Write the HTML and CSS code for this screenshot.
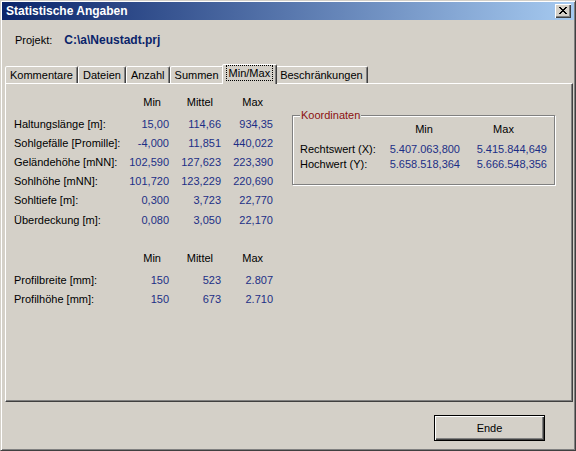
FILE: index.html
```html
<!DOCTYPE html>
<html lang="de">
<head>
  <meta charset="UTF-8" />
  <title>Statistische Angaben</title>
  <link rel="stylesheet" href="styles.css">
</head>
<body>
  <div class="window">
    <div class="titlebar">
      <span class="title">Statistische Angaben</span>
      <button class="close" title="Schließen">
        <svg width="8" height="7" viewBox="0 0 8 7" shape-rendering="crispEdges">
          <path d="M0 0h2v1H0zM6 0h2v1H6zM1 1h2v1H1zM5 1h2v1H5zM2 2h4v1H2zM3 3h2v1H3zM2 4h4v1H2zM1 5h2v1H1zM5 5h2v1H5zM0 6h2v1H0zM6 6h2v1H6z" fill="#000"/>
        </svg>
      </button>
    </div>

    <div class="project">
      <span>Projekt:</span>
      <span class="path">C:\a\Neustadt.prj</span>
    </div>

    <div class="tabs">
      <div class="tab">Kommentare</div>
      <div class="tab">Dateien</div>
      <div class="tab">Anzahl</div>
      <div class="tab">Summen</div>
      <div class="tab active"><span class="focus">Min/Max</span></div>
      <div class="tab">Beschränkungen</div>
    </div>

    <div class="panel">
      <div class="stats">
        <div class="grid">
          <span></span><span class="hd">Min</span><span class="hd">Mittel</span><span class="hd hd-max">Max</span>
          <span>Haltungslänge [m]:</span><span class="val">15,00</span><span class="val">114,66</span><span class="val">934,35</span>
          <span>Sohlgefälle [Promille]:</span><span class="val">-4,000</span><span class="val">11,851</span><span class="val">440,022</span>
          <span>Geländehöhe [mNN]:</span><span class="val">102,590</span><span class="val">127,623</span><span class="val">223,390</span>
          <span>Sohlhöhe [mNN]:</span><span class="val">101,720</span><span class="val">123,229</span><span class="val">220,690</span>
          <span>Sohltiefe [m]:</span><span class="val">0,300</span><span class="val">3,723</span><span class="val">22,770</span>
          <span>Überdeckung [m]:</span><span class="val">0,080</span><span class="val">3,050</span><span class="val">22,170</span>
        </div>

        <div class="grid second">
          <span></span><span class="hd">Min</span><span class="hd">Mittel</span><span class="hd hd-max">Max</span>
          <span>Profilbreite [mm]:</span><span class="val">150</span><span class="val">523</span><span class="val">2.807</span>
          <span>Profilhöhe [mm]:</span><span class="val">150</span><span class="val">673</span><span class="val">2.710</span>
        </div>
      </div>

      <fieldset class="coords">
        <legend>Koordinaten</legend>
        <div class="cgrid">
          <span></span><span class="chd">Min</span><span class="chd">Max</span>
          <span>Rechtswert (X):</span><span class="val">5.407.063,800</span><span class="val">5.415.844,649</span>
          <span>Hochwert (Y):</span><span class="val">5.658.518,364</span><span class="val">5.666.548,356</span>
        </div>
      </fieldset>
    </div>

    <div class="footer">
      <button class="btn">Ende</button>
    </div>
  </div>
</body>
</html>
```

FILE: styles.css
```css
body {
  margin: 0;
  background: #d4d0c8;
  font-family: "Liberation Sans", Arial, sans-serif;
  font-size: 11px;
  color: #000;
}

.window {
  width: 576px;
  height: 451px;
  box-sizing: border-box;
  padding: 1px;
  border: 1px solid;
  border-color: #d4d0c8 #404040 #404040 #d4d0c8;
  box-shadow: inset 1px 1px 0 #fff, inset -1px -1px 0 #808080;
  display: flex;
  flex-direction: column;
}

/* title bar */
.titlebar {
  height: 18px;
  display: flex;
  align-items: center;
  background: linear-gradient(to right, #0a246a, #a6caf0);
  padding: 0 3px 0 4px;
}

.title {
  flex: 1;
  color: #fff;
  font-weight: bold;
  font-size: 12px;
}

.close {
  width: 16px;
  height: 14px;
  padding: 0;
  border: none;
  background: #d4d0c8;
  box-shadow: inset 1px 1px 0 #fff, inset -1px -1px 0 #404040, inset -2px -2px 0 #808080;
  display: flex;
  align-items: center;
  justify-content: center;
}

.close svg {
  margin: 0 1px 1px 0;
}

/* project line */
.project {
  margin: 13px 0 0 13px;
  line-height: 14px;
  display: flex;
  gap: 12px;
}

.path {
  font-weight: bold;
  font-size: 12px;
  color: #0a246a;
}

/* tabs */
.tabs {
  display: flex;
  align-items: flex-end;
  height: 19px;
  margin: 17px 0 0 3px;
}

.tab {
  height: 17px;
  box-sizing: border-box;
  line-height: 16px;
  padding: 0 4px;
  border: 1px solid;
  border-bottom: none;
  border-color: #fff #404040 transparent #fff;
  border-radius: 2px 2px 0 0;
  box-shadow: inset -1px 0 0 #808080;
  background: #d4d0c8;
  white-space: nowrap;
}

.tab.active {
  position: relative;
  z-index: 1;
  height: 20px;
  margin: 0 -2px -1px;
  padding: 1px 4px 0;
  line-height: 14px;
}

.focus {
  display: inline-block;
  padding: 0 2px;
  outline: 1px dotted #000;
  outline-offset: 0;
}

/* panel */
.panel {
  height: 319px;
  box-sizing: border-box;
  margin: 0 1px 0 3px;
  padding: 6px 0 0 8px;
  border: 1px solid;
  border-color: #fff #404040 #404040 #fff;
  box-shadow: inset -1px -1px 0 #808080;
  display: flex;
  align-items: flex-start;
}

.grid {
  display: grid;
  grid-template-columns: 106px 49px 52px 52px;
  grid-template-rows: 24px;
  grid-auto-rows: 19.2px;
  align-items: center;
  white-space: nowrap;
}

.grid.second {
  margin-top: 17px;
}

.hd {
  text-align: right;
  padding-right: 8px;
}

.hd-max {
  padding-right: 10px;
}

.val {
  text-align: right;
  color: #1c2f86;
}

/* coordinates group */
.coords {
  width: 263px;
  box-sizing: border-box;
  margin: 18px 0 0 19px;
  padding: 0 6px 12px 7px;
  border: 1px solid #808080;
  box-shadow: inset 1px 1px 0 #fff, 1px 1px 0 #fff;
}

.coords legend {
  padding: 0 1px;
  line-height: 14px;
  color: #8c1010;
  background: #d4d0c8;
}

.cgrid {
  display: grid;
  grid-template-columns: 88px 72px 87px;
  line-height: 15px;
  white-space: nowrap;
}

.chd {
  text-align: center;
  padding-bottom: 5px;
}

/* footer */
.footer {
  display: flex;
  justify-content: flex-end;
  margin: 13px 29px 0 0;
}

.btn {
  width: 111px;
  height: 26px;
  box-sizing: border-box;
  padding: 0;
  border: 1px solid #000;
  background: #d4d0c8;
  box-shadow: inset 1px 1px 0 #fff, inset -1px -1px 0 #404040, inset -2px -2px 0 #808080;
  font: inherit;
  color: #000;
}
```
